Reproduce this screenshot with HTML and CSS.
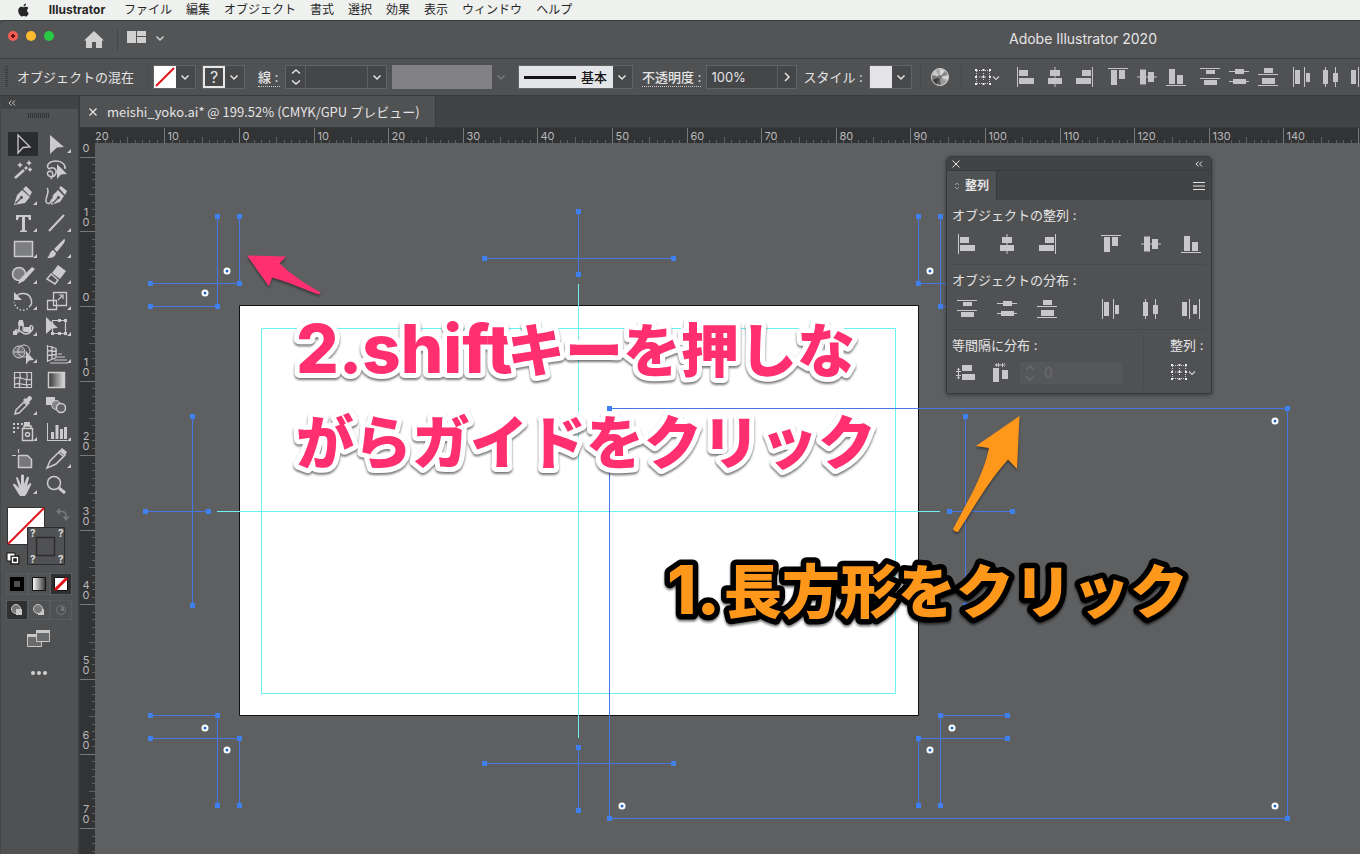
FILE: index.html
```html
<!DOCTYPE html>
<html lang="ja">
<head>
<meta charset="utf-8">
<title>Adobe Illustrator 2020</title>
<link rel="stylesheet" href="styles.css">
</head>
<body>
<svg class="defs" aria-hidden="true">
  <symbol id="al-left" viewBox="0 0 20 20"><path d="M1 0h1v20H1zM3 3h9v6H3zM3 11h15v6H3z"/></symbol>
  <symbol id="al-center" viewBox="0 0 20 20"><path d="M9.500 0h1v20h-1zM5 3h10v6H5zM3 11h14v6H3z"/></symbol>
  <symbol id="al-right" viewBox="0 0 20 20"><path d="M18 0h1v20h-1zM8 3h9v6H8zM2 11h15v6H2z"/></symbol>
  <symbol id="al-top" viewBox="0 0 20 20"><path d="M0 1h20v1H0zM3 3h6v15H3zM11 3h6v9h-6z"/></symbol>
  <symbol id="al-middle" viewBox="0 0 20 20"><path d="M0 9.500h20v1H0zM3 2.500h6v15H3zM11 5h6v10h-6z"/></symbol>
  <symbol id="al-bottom" viewBox="0 0 20 20"><path d="M0 18h20v1H0zM3 2h6v15H3zM11 8h6v9h-6z"/></symbol>
  <symbol id="di-top" viewBox="0 0 20 20"><path d="M0 1h20v1H0zM6 3h9v4H6zM0 11h20v1H0zM4 13h13v5H4z"/></symbol>
  <symbol id="di-vcenter" viewBox="0 0 20 20"><path d="M0 4h20v1H0zM6 2h9v5H6zM0 14h20v1H0zM4 12h13v5H4z"/></symbol>
  <symbol id="di-bottom" viewBox="0 0 20 20"><path d="M6 1h9v5H6zM0 7h20v1H0zM4 11h13v6H4zM0 18h20v1H0z"/></symbol>
  <symbol id="di-left" viewBox="0 0 20 20"><path d="M1 0h1v20H1zM3 3h5v14H3zM12 0h1v20h-1zM14 6h4v9h-4z"/></symbol>
  <symbol id="di-hcenter" viewBox="0 0 20 20"><path d="M4 0h1v20H4zM2 3h5v14H2zM14 0h1v20h-1zM12 6h5v9h-5z"/></symbol>
  <symbol id="di-right" viewBox="0 0 20 20"><path d="M1 3h5v14H1zM8 0h1v20H8zM12 6h4v9h-4zM18 0h1v20h-1z"/></symbol>
  <symbol id="sp-vert" viewBox="0 0 20 20"><path d="M6 2h10v6H6zM6 11h13v6H6zM2 5h1v11H2zM0 8h5v1H0zM0 12h5v1H0zM1 7l1.500-2.500L4 7zM1 14h3l-1.500 2.500z"/></symbol>
  <symbol id="sp-horz" viewBox="0 0 20 20"><path d="M3 5h6v14H3zM12 7h6v9h-6zM5 1.500h11v1H5zM8 0h1v4H8zM12 0h1v4h-1zM7 0v4L5 2zM14 0v4l2-2z"/></symbol>
  <symbol id="chev" viewBox="0 0 10 10"><path d="M1.500 3.500L5 7l3.500-3.500" fill="none" stroke="currentColor" stroke-width="1.500"/></symbol>
  <symbol id="step" viewBox="0 0 10 20"><path d="M1 6.500L5 3l4 3.500M1 13.500L5 17l4-3.500" fill="none" stroke="currentColor" stroke-width="1.500"/></symbol>
  <symbol id="alignto" viewBox="0 0 26 18"><path d="M3 2.500h12M3 15.500h12M2.500 3v12M15.500 3v12M9.500 5v8M5 9h8" stroke="currentColor" stroke-width="1" stroke-dasharray="1 1" fill="none"/><path d="M1 1h2v2H1zM8.500 1h2v2h-2zM15 1h2v2h-2zM1 8h2v2H1zM8.500 8h2v2h-2zM15 8h2v2h-2zM1 15h2v2H1zM8.500 15h2v2h-2zM15 15h2v2h-2z" fill="#f0f0f0"/><path d="M19 8.500l3 3 3-3" fill="none" stroke="currentColor" stroke-width="1.200"/></symbol>
</svg>

<nav class="menubar" aria-label="メニュー">
  <svg class="apple" viewBox="0 0 24 24"><path d="M12.152 6.896c-.948 0-2.415-1.078-3.960-1.040-2.040.027-3.910 1.183-4.961 3.014-2.117 3.675-.546 9.103 1.519 12.090 1.013 1.454 2.208 3.090 3.792 3.039 1.520-.065 2.090-.987 3.935-.987 1.831 0 2.350.987 3.960.948 1.637-.026 2.676-1.480 3.676-2.948 1.156-1.688 1.636-3.325 1.662-3.415-.039-.013-3.182-1.221-3.220-4.857-.026-3.040 2.480-4.494 2.597-4.559-1.429-2.090-3.623-2.324-4.390-2.376-2-.156-3.675 1.090-4.610 1.090zM15.530 3.830c.843-1.012 1.400-2.427 1.245-3.830-1.207.052-2.662.805-3.532 1.818-.780.896-1.454 2.338-1.273 3.714 1.338.104 2.715-.688 3.559-1.701"/></svg>
  <button class="menu app">Illustrator</button>
  <button class="menu">ファイル</button><button class="menu">編集</button><button class="menu">オブジェクト</button><button class="menu">書式</button><button class="menu">選択</button><button class="menu">効果</button><button class="menu">表示</button><button class="menu">ウィンドウ</button><button class="menu">ヘルプ</button>
</nav>

<header class="titlebar">
  <div class="lights"><button class="light close" aria-label="閉じる"></button><button class="light min" aria-label="しまう"></button><button class="light max" aria-label="拡大"></button></div>
  <button class="home" aria-label="ホーム"><svg width="20" height="18" viewBox="0 0 20 18"><path d="M10 0L0 9.500h2V17h6v-6h4v6h6V9.500h2z"/></svg></button>
  <button class="arrange" aria-label="ワークスペース"><svg width="20" height="13" viewBox="0 0 20 13"><path d="M0 0h9v12H0zM10 0h9v5h-9zM10 6h9v6h-9z"/></svg><svg width="10" height="10"><use href="#chev"/></svg></button>
  <h1 class="title">Adobe Illustrator 2020</h1>
</header>

<div class="controls">
  <span class="grip"></span>
  <span class="mix">オブジェクトの混在</span>
  <button class="combo fill" aria-label="塗り"><svg class="chip" viewBox="0 0 22 22"><path d="M0 0h22v22H0z" fill="#fff"/><path d="M2 20L20 2" stroke="#e0121a" stroke-width="2"/></svg><svg class="arr"><use href="#chev"/></svg></button>
  <button class="combo strokec" aria-label="線の色"><span class="question">?</span><svg class="arr"><use href="#chev"/></svg></button>
  <label class="dotted weight-label" for="weight">線 :</label>
  <div class="field weight"><button class="stepper" aria-label="線幅を増減"><svg width="10" height="20"><use href="#step"/></svg></button><input id="weight" type="text"><button class="drop" aria-label="線幅を選択"><svg class="arr"><use href="#chev"/></svg></button></div>
  <button class="combo profile" disabled aria-label="プロファイル"><span class="gray"></span><svg class="arr"><use href="#chev"/></svg></button>
  <button class="combo brush"><span class="basic"><i></i>基本</span><svg class="arr"><use href="#chev"/></svg></button>
  <label class="dotted" for="opacity">不透明度 :</label>
  <div class="field opacity"><input id="opacity" type="text" value="100%"><button class="drop" aria-label="不透明度を選択"><svg width="10" height="10" viewBox="0 0 10 10"><path d="M3 1l4 4-4 4" fill="none" stroke="currentColor" stroke-width="1.500"/></svg></button></div>
  <span class="style-label">スタイル :</span>
  <button class="combo style" aria-label="スタイル"><span class="light-chip"></span><svg class="arr"><use href="#chev"/></svg></button>
  <button class="wheel" aria-label="オブジェクトを再配色"><svg width="20" height="20" viewBox="0 0 20 20"><circle cx="10" cy="10" r="8.500" fill="#aaa"/><path d="M10 10V2l5 1.500zM10 10l8-2v5z" fill="#d8d8d8"/><path d="M10 10l5-6 3 4z" fill="#888"/><path d="M10 10L2 8l3-5z" fill="#c8c8c8"/><path d="M10 10l-8-2v5z" fill="#777"/><path d="M10 10l-8 3 4 5z" fill="#3b3b3b"/><path d="M10 10l-4 7 5 1z" fill="#555"/><path d="M10 10l1 8 5-3z" fill="#999"/><circle cx="10" cy="10" r="8.500" fill="none" stroke="#d0d0d0"/><circle cx="10" cy="10" r="2" fill="#777"/></svg></button>
  <button class="alignto" aria-label="整列の基準"><svg width="26" height="18"><use href="#alignto"/></svg></button>
  <div class="alignset">
    <button aria-label="水平方向左に整列"><svg><use href="#al-left"/></svg></button><button aria-label="水平方向中央に整列"><svg><use href="#al-center"/></svg></button><button aria-label="水平方向右に整列"><svg><use href="#al-right"/></svg></button>
  </div>
  <div class="alignset">
    <button aria-label="垂直方向上に整列"><svg><use href="#al-top"/></svg></button><button aria-label="垂直方向中央に整列"><svg><use href="#al-middle"/></svg></button><button aria-label="垂直方向下に整列"><svg><use href="#al-bottom"/></svg></button>
  </div>
  <div class="alignset">
    <button aria-label="垂直方向上に分布"><svg><use href="#di-top"/></svg></button><button aria-label="垂直方向中央に分布"><svg><use href="#di-vcenter"/></svg></button><button aria-label="垂直方向下に分布"><svg><use href="#di-bottom"/></svg></button>
  </div>
  <div class="alignset">
    <button aria-label="水平方向左に分布"><svg><use href="#di-left"/></svg></button><button aria-label="水平方向中央に分布"><svg><use href="#di-hcenter"/></svg></button><button aria-label="水平方向右に分布"><svg><use href="#di-right"/></svg></button>
  </div>
</div>

<main class="workspace">
  <aside class="tools" aria-label="ツール">
    <button class="collapse" aria-label="折りたたむ"><svg width="8" height="6" viewBox="0 0 8 6"><path d="M3.500 .5L1 3l2.500 2.500M7 .5L4.500 3 7 5.500" fill="none" stroke="currentColor"/></svg></button>
    <div class="toolgrip"></div>
    <div class="toolgrid" id="toolgrid"></div>
    <svg class="fillstroke" width="68" height="62" viewBox="0 0 68 62" role="img" aria-label="塗りと線">
      <path d="M1.500 2.500h37v37h-37z" fill="#fff" stroke="#333"/><path d="M2 39L38 3" stroke="#e0121a" stroke-width="2"/>
      <path d="M21.500 22.500h37v37h-37z" fill="#505153" stroke="#2c2c2e"/><path d="M30.500 32.500h18v18h-18z" fill="none" stroke="#2c2c2e" stroke-width="1.500"/>
      <g class="qs"><text x="24" y="32">?</text><text x="52" y="32">?</text><text x="24" y="58">?</text><text x="52" y="58">?</text></g>
      <path d="M53 6.500h3q4 0 4 4V13" fill="none" stroke="#77787a" stroke-width="1.500"/><path d="M54 3v7l-4-3.500zM56.500 11.500h7L60 16z" fill="#77787a"/>
      <path d="M1 48h8v8H1z" fill="#fff" stroke="#111"/><path d="M6.500 52.500h5v5h-5z" fill="none" stroke="#111" stroke-width="4"/><path d="M6.500 52.500h5v5h-5z" fill="none" stroke="#fff" stroke-width="1.500"/>
    </svg>
    <div class="triple paint">
      <button aria-label="カラー"><svg width="16" height="16"><path d="M3 3h10v10H3z" fill="#505153" stroke="#000" stroke-width="4"/></svg></button>
      <button aria-label="グラデーション"><svg width="16" height="16"><defs><linearGradient id="g1"><stop stop-color="#fff"/><stop offset="1" stop-color="#333"/></linearGradient></defs><path d="M1.500 1.500h13v13h-13z" fill="url(#g1)" stroke="#111"/></svg></button>
      <button class="on" aria-label="なし"><svg width="16" height="16"><path d="M1.500 1.500h13v13h-13z" fill="#fff" stroke="#111"/><path d="M2 14L14 2" stroke="#e0121a" stroke-width="3"/></svg></button>
    </div>
    <div class="triple modes">
      <button class="on" aria-label="標準描画"><svg width="14" height="14"><circle cx="6" cy="6" r="4.500" fill="#777" stroke="#c8c8c8"/><path d="M6 6h6v6H6z" fill="#c8c8c8"/></svg></button>
      <button aria-label="背面描画"><svg width="14" height="14"><path d="M6 6h6v6H6z" fill="#c8c8c8"/><circle cx="6" cy="6" r="4.500" fill="#777" stroke="#c8c8c8"/></svg></button>
      <button aria-label="内側描画"><svg width="14" height="14"><circle cx="7" cy="7" r="4.500" fill="none" stroke="#737476"/><path d="M7 4h3v4H7z" fill="#737476"/></svg></button>
    </div>
    <button class="screenmode" aria-label="スクリーンモード"><svg width="26" height="20" viewBox="0 0 26 20"><path d="M1.500 5.500h14v12h-14z" fill="#6a6b6d" stroke="#c8c8c8"/><path d="M1 5h15v3H1z" fill="#c8c8c8"/><path d="M10.500 1.500h13v11h-13z" fill="#6a6b6d" stroke="#c8c8c8"/><path d="M10 1h14v3H10z" fill="#c8c8c8"/></svg></button>
    <button class="more" aria-label="ツールバーを編集"><svg width="18" height="6"><circle cx="3" cy="3" r="2"/><circle cx="9" cy="3" r="2"/><circle cx="15" cy="3" r="2"/></svg></button>
  </aside>

  <section class="document">
    <div class="tabs"><div class="doctab"><button aria-label="閉じる"><svg width="10" height="10" viewBox="0 0 10 10"><path d="M1.500 1.500l7 7M8.500 1.500l-7 7" stroke="currentColor" stroke-width="1.300"/></svg></button><span>meishi_yoko.ai* @ 199.52% (CMYK/GPU プレビュー)</span></div></div>
    <div class="sheet">
      <div class="corner"></div>
      <svg class="hruler" id="hruler"></svg>
      <svg class="vruler" id="vruler"></svg>
      <div class="canvas">
        <svg class="art" width="1265" height="711" viewBox="95 143 1265 711">
          <path d="M239.500 305.500h679v410h-679z" fill="#fff" stroke="#111"/>
          <g fill="none" stroke="#6df0f0"><path d="M261.500 328.500h634v365h-634z"/><path d="M578.500 284v454M217 511.500h723"/></g>
          <g class="guides" id="guides"></g>
        </svg>

        <section class="panel" aria-label="整列パネル">
          <div class="panel-head"><button aria-label="閉じる"><svg width="8" height="8" viewBox="0 0 8 8"><path d="M.5 .5l7 7M7.500 .5l-7 7" stroke="currentColor"/></svg></button><button aria-label="折りたたむ"><svg width="8" height="6" viewBox="0 0 8 6"><path d="M3.500 .5L1 3l2.500 2.500M7 .5L4.500 3 7 5.500" fill="none" stroke="currentColor"/></svg></button></div>
          <div class="panel-tabs"><button class="ptab"><svg width="6" height="8" viewBox="0 0 6 8"><path d="M1 3l2-2 2 2M1 5l2 2 2-2" fill="none" stroke="#999"/></svg>整列</button><button class="pmenu" aria-label="パネルメニュー"><svg width="12" height="10"><path d="M0 1.500h12M0 5h12M0 8.500h12" stroke="currentColor"/></svg></button></div>
          <div class="psec"><h2>オブジェクトの整列 :</h2>
            <div class="prow"><button aria-label="左"><svg><use href="#al-left"/></svg></button><button aria-label="中央"><svg><use href="#al-center"/></svg></button><button aria-label="右"><svg><use href="#al-right"/></svg></button><button class="push" aria-label="上"><svg><use href="#al-top"/></svg></button><button aria-label="中"><svg><use href="#al-middle"/></svg></button><button aria-label="下"><svg><use href="#al-bottom"/></svg></button></div></div>
          <div class="psec"><h2>オブジェクトの分布 :</h2>
            <div class="prow"><button aria-label="上に分布"><svg><use href="#di-top"/></svg></button><button aria-label="中央に分布"><svg><use href="#di-vcenter"/></svg></button><button aria-label="下に分布"><svg><use href="#di-bottom"/></svg></button><button class="push" aria-label="左に分布"><svg><use href="#di-left"/></svg></button><button aria-label="水平中央に分布"><svg><use href="#di-hcenter"/></svg></button><button aria-label="右に分布"><svg><use href="#di-right"/></svg></button></div></div>
          <div class="pfoot">
            <div class="space"><label for="gap">等間隔に分布 :</label><div class="spacerow"><button aria-label="垂直方向等間隔"><svg><use href="#sp-vert"/></svg></button><button aria-label="水平方向等間隔"><svg><use href="#sp-horz"/></svg></button><div class="gapfield"><svg width="10" height="20"><use href="#step"/></svg><input id="gap" type="text" value="0" disabled></div></div></div>
            <div class="to"><h2>整列 :</h2><button aria-label="整列の基準"><svg class="wide"><use href="#alignto"/></svg></button></div>
          </div>
        </section>

        <svg class="art notes" width="1265" height="711" viewBox="95 143 1265 711">
          <path class="soft" fill="#ff2f70" d="M247 255.500l39 1-6.500 7c13 12 27 21 41 29l-1.500 2c-17-6-32-13-47-17l-3 9z"/>
          <path class="soft" fill="#ff971a" d="M1019.500 416l-2.500 53-9-9.500c-20 22-34 48-50 72.500q-4 0-5-3c14-27 30-52 36-81l-13-2z"/>
          <g class="callout pink"><text class="lat" x="296" y="373">2.shift</text><text x="507" y="372">キーを押しな</text><text x="296" y="464">がらガイドをクリック</text></g>
          <g class="callout orange"><text class="lat" x="667" y="614">1.</text><text x="724" y="613">長方形をクリック</text></g>
        </svg>
      </div>
    </div>
  </section>
</main>
<script src="app.js"></script>
</body>
</html>
```

FILE: styles.css
```css
* { box-sizing: border-box; }
body {
  margin: 0;
  height: 100vh;
  display: flex;
  flex-direction: column;
  overflow: hidden;
  background: #505153;
  color: #e4e4e5;
  font: 13px/20px Inter, "Noto Sans CJK JP", sans-serif;
}
button {
  margin: 0; padding: 0; border: 0;
  background: none; color: inherit; font: inherit;
  display: flex; align-items: center; justify-content: center;
  flex: none;
}
input { border: 0; margin: 0; padding: 0; background: none; color: inherit; font: inherit; min-width: 0; }
h1, h2 { margin: 0; font: inherit; }
svg { display: block; flex: none; fill: currentColor; }
.defs { position: absolute; width: 0; height: 0; }

.menubar {
  flex: none; height: 20px;
  display: flex; align-items: center; gap: 14px;
  padding-left: 17px;
  background: #eff1ef; color: #262626;
  font-size: 12px;
}
.apple { width: 13px; height: 14px; }
.menu.app { font-weight: 700; margin: 0 3px; width: 60px; }

.titlebar {
  flex: none; height: 39px;
  display: flex; align-items: center;
  background: #535456;
  border-top: 1px solid #3c3d3f;
  border-bottom: 1px solid #3c3d3f;
  border-radius: 5px 0 0 0;
  padding-left: 8px;
}
.lights { display: flex; gap: 8px; align-self: flex-start; padding-top: 10px; }
.light { width: 10px; height: 10px; border-radius: 50%; }
.close { background: radial-gradient(#6b0f0c 0 2px, #f35f57 2px); }
.min { background: #fcbc2e; }
.max { background: #28c840; }
.home { margin-left: 30px; padding-right: 13px; height: 22px; border-right: 1px solid #454648; color: #d0d0d0; }
.arrange { margin-left: 9px; gap: 8px; color: #d0d0d0; padding-bottom: 4px; }
.title { margin-left: auto; padding: 0 203px 2px 0; font-size: 14px; }

.controls {
  flex: none; height: 37px;
  display: flex; align-items: center;
  background: #505153;
  border-bottom: 1px solid #3a3b3d;
  overflow: hidden;
  white-space: nowrap;
}
.controls > * { flex: none; }
.grip { width: 3px; height: 22px; margin: 0 9px 0 5px; background: repeating-linear-gradient(#3a3b3d 0 1px, #505153 1px 2px); }
.mix { width: 131px; border-right: 1px solid #48494b; line-height: 26px; }
.combo { border: 1px solid #626365; background: #47484a; height: 24px; }
.arr { width: 10px; height: 10px; margin: 0 5px 0 4px; }
.fill { margin-left: 5px; }
.chip { width: 22px; height: 22px; }
.strokec { margin-left: 6px; }
.question { width: 22px; height: 22px; border: 2px solid #e8e8e8; font-size: 16px; line-height: 18px; }
.dotted { border-bottom: 1px dotted #c8c8c8; line-height: 18px; font-weight: 500; }
.weight-label { margin-left: 13px; width: 22px; }
.field { display: flex; border: 1px solid #626365; background: #454648; height: 24px; }
.weight { margin-left: 5px; }
.stepper { width: 20px; border-right: 1px solid #5c5d5f; }
.weight input { width: 61px; }
.drop { width: 19px; border-left: 1px solid #5c5d5f; }
.drop .arr { margin: 0; }
.profile { margin-left: 4px; border-color: #505153; background: #505153; color: #77787a; }
.gray { width: 100px; height: 24px; background: #828284; }
.brush { margin-left: 6px; }
.basic { display: flex; align-items: center; gap: 5px; width: 94px; height: 22px; padding: 0 5px; background: #e4e5e8; color: #151515; font-weight: 500; }
.basic i { width: 52px; height: 3px; background: #151515; }
.brush + .dotted { margin-left: 9px; }
.opacity { margin-left: 5px; }
.opacity input { width: 70px; padding-left: 4px; }
.style-label { margin-left: 6px; width: 60px; }
.style { margin-left: 6px; }
.light-chip { width: 22px; height: 22px; background: #e4e4e6; }
.wheel { margin-left: 8px; padding: 0 11px 0 9px; height: 26px; border: solid #48494b; border-width: 0 1px; }
.alignto { margin-left: 12px; color: #cdcdcf; }
.alignset { display: flex; color: #c4c4c6; margin-left: 5px; }
.alignto + .alignset { margin-left: 11px; }
.alignset button { width: 29px; height: 24px; }
.alignset svg, .prow svg, .spacerow button svg { width: 20px; height: 20px; }

.workspace { flex: 1; min-height: 0; display: flex; background: #424345; }
.tools { flex: none; width: 80px; background: #505153; border-right: 2px solid #3a3b3d; border-left: 1px solid #454648; display: flex; flex-direction: column; }
.collapse { height: 13px; background: #424345; justify-content: flex-start; padding-left: 7px; color: #c8c8c8; }
.toolgrip { width: 22px; height: 5px; margin: 4px 0 0 27px; background: repeating-linear-gradient(90deg, #333436 0 1px, #505153 1px 2px); }
.toolgrid { display: grid; grid-template-columns: 34px 34px; grid-template-rows: repeat(14, 1fr); height: 367px; margin: 13px 0 0 5px; color: #cbcbcd; }
.tool { width: 34px; height: 26px; }
.tool.on { background: linear-gradient(#2b2c2e, #2b2c2e) center / 30px 24px no-repeat; }
.fillstroke { margin: 7px 0 0 5px; }
.qs { font: 700 10px Inter, sans-serif; fill: #ddd; }
.triple { display: grid; grid-template-columns: repeat(3, 22px); margin-left: 5px; height: 22px; color: #ccc; }
.paint { margin-top: 6px; }
.modes { margin-top: 5px; height: 20px; }
.triple button { border: 1px solid #595a5c; }
.triple .on { background: #2f3032; }
.screenmode { margin: 9px 0 0 25px; width: 26px; height: 20px; }
.more { margin: 21px 0 0 29px; width: 18px; height: 6px; color: #d0d0d0; }

.document { flex: 1; min-width: 0; display: flex; flex-direction: column; }
.tabs { flex: none; height: 31px; display: flex; }
.doctab { display: flex; align-items: center; gap: 9px; padding: 0 15px 0 8px; background: #505153; border-right: 1px solid #38393b; font-family: "Noto Sans CJK JP", sans-serif; white-space: nowrap; }
.sheet { flex: 1; min-height: 0; display: grid; grid-template-columns: 15px 1fr; grid-template-rows: 15px 1fr; border-top: 1px solid #38393b; }
.corner, .hruler, .vruler { background: #323335; }
.hruler { width: 100%; height: 15px; }
.vruler { width: 15px; height: 100%; }
.hruler text, .vruler text { font: 11px Inter, sans-serif; fill: #b9b9bb; }
.vruler text { text-anchor: middle; }
.tick { stroke: #5e5f61; fill: none; }
.tick.major { stroke: #77787a; }
.canvas { position: relative; overflow: hidden; background: #5e5f61; }
.art { position: absolute; left: 0; top: 0; }
.guides { stroke: #4577e6; fill: none; }
.guides .pt { fill: #4080ee; stroke: none; }
.guides circle { fill: #2468c8; stroke: #fff; stroke-width: 2; }

.panel {
  position: absolute; left: 851px; top: 13px; width: 266px;
  background: #505153; border: 1px solid #38393b; border-radius: 5px 5px 2px 2px;
  overflow: hidden; box-shadow: 0 1px 4px #0006;
}
.panel-head { height: 14px; display: flex; justify-content: space-between; align-items: center; padding: 0 8px 0 5px; background: #424345; border-bottom: 1px solid #38393b; }
.panel-tabs { height: 29px; display: flex; justify-content: space-between; background: #424345; }
.ptab { width: 50px; background: #505153; gap: 5px; font-size: 12px; font-weight: 700; border-right: 1px solid #38393b; }
.pmenu { padding-right: 6px; }
.psec { margin: 0 6px 0 5px; height: 65px; padding-top: 5px; border-bottom: 1px solid #484a4c; }
.prow { display: flex; gap: 20px; margin: 9px 4px 0 5px; color: #c8c8ca; }
.push { margin-left: auto; }
.pfoot { display: flex; margin: 0 6px 0 5px; height: 63px; padding: 5px 0 3px; }
.space { flex: 1; border-right: 1px solid #484a4c; }
.spacerow { display: flex; align-items: center; gap: 14px; margin-top: 7px; padding-left: 4px; color: #c8c8ca; }
.gapfield { display: flex; align-items: center; width: 102px; height: 22px; padding-left: 5px; gap: 9px; background: #565759; color: #6a6b6d; margin-left: -4px; font-size: 14px; }
.gapfield input { width: 60px; }
.to { width: 61px; padding-left: 26px; }
.to button { margin-top: 8px; color: #cdcdcf; }
.wide { width: 26px; height: 18px; }

.notes { pointer-events: none; }
.soft { filter: drop-shadow(0 2px 1px #0006); }
.callout { font: 900 58px "Noto Sans CJK JP", sans-serif; paint-order: stroke; stroke-linejoin: round; filter: drop-shadow(0 2px 1px #0008); }
.lat { font-family: Inter, sans-serif; font-size: 67px; font-weight: 800; }
.pink { fill: #ff2f70; stroke: #fff; stroke-width: 10px; }
.orange { fill: #ff971a; stroke: #000; stroke-width: 11px; }
```

FILE: app.js
```js
const corner = '<path d="M31 18v4h-4z"/>';
const line = (d, w = 1.5) => `<path d="${d}" fill="none" stroke="currentColor" stroke-width="${w}"/>`;
// name, artwork, has a flyout
const tools = [
  ['選択', line('M12 4l12 12-7 .5L12 22z', 1.3), 0],
  ['ダイレクト選択', '<path d="M10 4l14 12-7 .5L10 23z"/>', 1],
  ['自動選択', line('M9 21l9-8', 2.5) + line('M19 12l2-2', 2.5) + '<path d="M14 5l1 2 2 1-2 1-1 2-1-2-2-1 2-1zM23 3l1 2 2 1-2 1-1 2-1-2-2-1 2-1zM24 10l1 1.500 1.500 1-1.500 1-1 1.500-1-1.500-1.500-1 1.500-1z"/>', 0],
  ['なげなわ', line('M9 12C5 8 10 4 16 4s10 4 9 8M9 12c4-3 8 0 7 4s-6 5-8 2 2-5 4-3 0 5-1 7') + '<path d="M17 7l10 10-6 .5-4 4.500z"/>', 0],
  ['ペン', '<path fill-rule="evenodd" d="M8 22l3-10 5-5 8 7-5 6zM9 20l5-5a1.500 1.500 0 1 1 1 1l-5 5zM17 6l3-3 6 6-2 4z"/>', 1],
  ['曲線', line('M7 5c4 4-4 12 0 15 3 2 4-2 5-4') + '<path fill-rule="evenodd" d="M11 22l2-10 5-5 6 6-4 6zM12 20l5-5a1.500 1.500 0 1 1 1 1l-5 5zM19 5l2-2 6 5-2 4z"/>', 0],
  ['文字', '<path d="M10 5h15v5h-2l-1-3h-3v13l2 1v1h-7v-1l2-1V7h-3l-1 3h-2z"/>', 1],
  ['直線', line('M9 21L24 5', 2), 1],
  ['長方形', '<path d="M8.500 5.500h18v15h-18z" fill="#7d7e80" stroke="currentColor" stroke-width="1.500"/>', 1],
  ['ブラシ', '<path d="M24 3q2 0 0 4l-7 9-3-3zM13 14l3 3c-1 5-5 5-9 5 3-2 2-6 6-8z"/>', 1],
  ['Shaper', '<circle cx="13" cy="12" r="6.500" fill="#7d7e80" stroke="currentColor" stroke-width="1.500"/><path d="M26 5l3 2-11 12-6 3 2-5z"/>', 1],
  ['消しゴム', '<path d="M18 3l8 6-6 8-8-6z"/><path d="M11 12l7 6-3 4-8-5z" fill="none" stroke="currentColor" stroke-width="1.500"/>', 1],
  ['回転', line('M10 9c3-5 13-5 15 2s-1 6-1 7') + '<path d="M8 4v8h8z"/>' + '<path d="M24 18c-4 7-14 5-16-4" fill="none" stroke="currentColor" stroke-width="1.500" stroke-dasharray="1.500 2"/>', 1],
  ['拡大・縮小', line('M13.500 4.500h13v13h-13zM7.500 12.500h9v9h-9z', 1.3) + line('M18 12l5-5M19 7h4v4', 1.2), 1],
  ['線幅', line('M8 18c5 3 6-3 5-7s3-6 4-2-2 9 3 8 3-7 6-5-2 8-6 8-6-5-10-4z') + '<path d="M7 17h4v4H7zM13 6h4v6h-4zM18 13h7v5h-7z"/>', 1],
  ['自由変形', line('M12.500 6.500h13v13h-13z', 1.2) + '<path d="M6 3l12 11-6 .5L6 20zM24 5h3v3h-3zM24 18h3v3h-3zM11 18h3v3h-3zM18 5h3v3h-3zM18 18h3v3h-3z"/>', 1],
  ['シェイプ形成', '<circle cx="13" cy="11" r="6" fill="#707173" stroke="currentColor"/><circle cx="18" cy="10" r="6" fill="none" stroke="currentColor"/>' + line('M8 11h10', 1) + '<path d="M20 10l8 9-5 .5-3 4z"/>', 1],
  ['遠近グリッド', line('M7.500 4v17M12 5v14M16 7v10M7 4.500l9 3M7 9.500l10 1M7 14.500l10-1M7 20.500l9-4', 1.3) + line('M18 13h4M17 16h8M14 19h13M10 22h18', 1), 1],
  ['メッシュ', line('M8.500 5.500h17v15h-17zM8 12c7-5 11 4 18 0M8 18c5-4 10 2 18-1M13 5c4 5-2 10 1 16M20 5c4 6-3 10 2 16', 1.2), 0],
  ['グラデーション', '<defs><linearGradient id="tg"><stop stop-color="#333"/><stop offset="1" stop-color="#ddd"/></linearGradient></defs><path d="M8.500 5.500h16v15h-16z" fill="url(#tg)" stroke="currentColor" stroke-width="1.500"/>', 0],
  ['スポイト', line('M9 21l1-4 8-8 3 3-8 8z') + '<path d="M17 7l2-2 1 1 3-3q3 0 3 3l-3 3 1 1-2 2z"/>', 1],
  ['ブレンド', '<path d="M6 4h9v8H6z"/><circle cx="16" cy="12" r="4.500" fill="#858688" stroke="currentColor"/><circle cx="21" cy="15" r="4.500" fill="#606163" stroke="currentColor" stroke-width="1.500"/>', 0],
  ['シンボル', '<path d="M7 4h2v2H7zM11 4h2v2h-2zM15 4h2v2h-2zM7 8h2v2H7zM11 8h2v2h-2zM7 12h2v2H7zM18 3h6v4h-6z"/>' + line('M16.500 9.500h10v12h-10zM18 9V7h7v2') + '<circle cx="21.500" cy="15.500" r="2" fill="none" stroke="currentColor" stroke-width="1.500"/>', 1],
  ['グラフ', '<path d="M7 4h1v17h19v1H7zM11 13h3v7h-3zM15.500 6h3v14h-3zM20 10h3v10h-3zM24 8h3v12h-3z"/>', 1],
  ['アートボード', '<path d="M12.500 9.500h9l4 4v8h-13z" fill="#77787a" stroke="currentColor" stroke-width="1.500"/>' + line('M12.500 3v4M6 9.500h4', 1.2), 0],
  ['スライス', line('M7 22l3-7 10-10 5 4-9 9zM18 6l5 4') + '<path d="M20 4l2-2 5 4-2 3z"/>', 1],
  ['手のひら', '<path d="M12 21l-5-8q0-2 2-1l4 4-3-10q1-2 2 0l3 7V3q1-1 3 0v9l3-7q2-1 2 1l-2 8 3-3q2 0 1 2l-4 8-2 3h-5z"/>', 1],
  ['ズーム', '<circle cx="14" cy="11" r="6.500" fill="none" stroke="currentColor" stroke-width="1.500"/>' + line('M19 16l6 5', 3), 0],
];
document.getElementById('toolgrid').innerHTML = tools.map(([name, art, fly], i) =>
  `<button class="tool${i ? '' : ' on'}" aria-label="${name}"><svg width="34" height="26" viewBox="0 0 34 26">${art}${fly ? corner : ''}</svg></button>`).join('');

// Rulers: 10 mm equals 74.6 px at this zoom; zero lies on the artboard corner.
const unit = 74.6;
const tickStart = i => (i % 10 === 0 ? 0 : i % 5 === 0 ? 9 : 12);
const tickClass = i => (i % 10 === 0 ? 'tick major' : 'tick');
let h = '';
for (let i = -20; i <= 240; i++) {
  const x = Math.round(144 + i * unit / 10) + .5;
  h += `<path class="${tickClass(i)}" d="M${x} ${tickStart(i)}V15"/>`;
  if (i % 10 === 0 && x + 20 < innerWidth - 95) h += `<text x="${Math.max(x + 3, 0)}" y="12">${Math.abs(i)}</text>`;
}
document.getElementById('hruler').innerHTML = h;
let v = '';
for (let i = -20; i <= 120; i++) {
  const y = Math.round(163 + i * unit / 10) + .5;
  v += `<path class="${tickClass(i)}" d="M${tickStart(i)} ${y}H15"/>`;
  if (i % 10 === 0) {
    const digits = String(Math.abs(i)).split('').reverse();
    digits.forEach((d, k) => {
      const base = y - 6 - k * 10;
      if (base > 5) v += `<text x="6" y="${base}">${d}</text>`;
    });
  }
}
document.getElementById('vruler').innerHTML = v;

// Selected guides: polylines with an anchor on each point.
const lines = [
  [[217, 216], [217, 306], [150, 306]], [[239, 216], [239, 283], [150, 283]],
  [[940, 216], [940, 306], [1007, 306]], [[918, 216], [918, 283], [1007, 283]],
  [[150, 715], [217, 715], [217, 805]], [[150, 738], [239, 738], [239, 805]],
  [[1007, 715], [940, 715], [940, 805]], [[1007, 738], [918, 738], [918, 805]],
  [[578, 211], [578, 274]], [[484, 258], [673, 258]], [[578, 747], [578, 810]], [[484, 763], [673, 763]],
  [[192, 416], [192, 605]], [[145, 511], [208, 511]], [[965, 416], [965, 605]], [[949, 511], [1012, 511]],
  [[609, 408], [1287, 408], [1287, 818], [609, 818], [609, 408]],
];
const centers = [[227, 271], [205, 293], [930, 271], [205, 728], [227, 750], [952, 728], [930, 750], [1275, 421], [622, 806], [1275, 806]];
document.getElementById('guides').innerHTML =
  lines.map(l => `<path d="M${l.map(p => `${p[0] + .5} ${p[1] + .5}`).join('L')}"/>` +
    l.map(p => `<rect class="pt" x="${p[0] - 2}" y="${p[1] - 2}" width="5" height="5"/>`).join('')).join('') +
  centers.map(c => `<circle cx="${c[0]}" cy="${c[1]}" r="2.500"/>`).join('');
```
